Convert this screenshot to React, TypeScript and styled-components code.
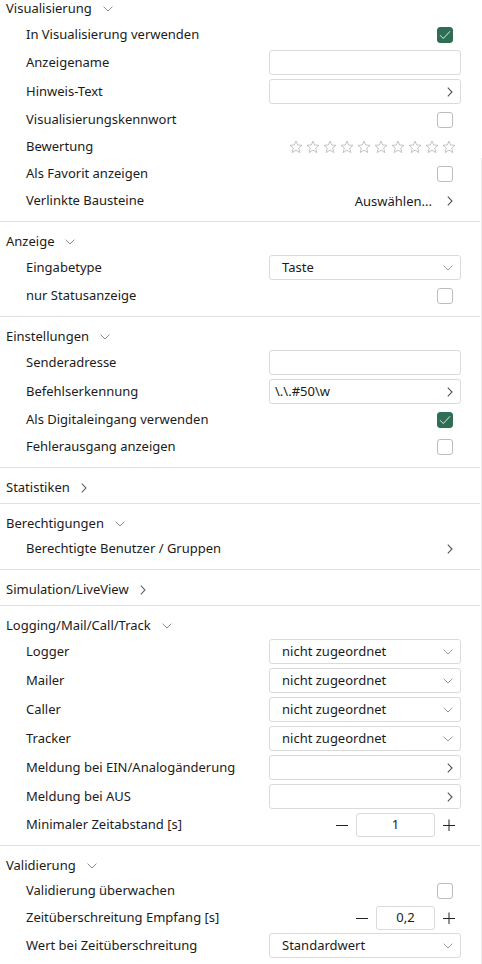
import React from "react";
import styled, { createGlobalStyle } from "styled-components";

const Global = createGlobalStyle`
  html, body { margin: 0; padding: 0; background: #ffffff; }
  body {
    font-family: "Segoe UI", "Noto Sans", "Open Sans", sans-serif;
    font-size: 13px;
    color: #1b1b1b;
  }
  * { box-sizing: border-box; }
`;

const Page = styled.div`
  width: 480px;
  display: flex;
  flex-direction: column;
`;

const ScrollTrack = styled.div`
  position: fixed;
  left: 481px;
  top: 158px;
  bottom: 0;
  width: 1px;
  background: #ececec;
`;

const Section = styled.section<{ $last?: boolean; $collapsed?: boolean }>`
  display: flex;
  flex-direction: column;
  padding-bottom: ${(p) => (p.$collapsed ? 4 : 7)}px;
  border-bottom: ${(p) => (p.$last ? "none" : "1px solid #e1e1e1")};
`;

const Header = styled.div<{ $first?: boolean }>`
  display: flex;
  align-items: ${(p) => (p.$first ? "flex-start" : "center")};
  gap: 11px;
  height: ${(p) => (p.$first ? 21 : 31)}px;
  padding-top: ${(p) => (p.$first ? 0 : 8)}px;
  padding-left: 6px;
  line-height: 17px;
  font-size: 13px;
  color: #1b1b1b;
`;

const HeaderIcon = styled.span`
  display: flex;
  align-items: center;
  height: 17px;
`;

const Row = styled.div<{ $h: number }>`
  display: flex;
  align-items: center;
  justify-content: space-between;
  height: ${(p) => p.$h}px;
  padding: 0 19px 0 26px;
`;

const Label = styled.span`
  white-space: nowrap;
  line-height: 17px;
`;

const Field = styled.div`
  width: 192px;
  height: 25px;
  border: 1px solid #dadada;
  border-radius: 3px;
  display: flex;
  align-items: center;
  justify-content: space-between;
  padding: 0 7px 0 12px;
  background: #fff;
`;

const FieldText = styled.span`
  line-height: 17px;
`;

const FieldPlain = styled.span`
  margin-left: -7px;
  line-height: 17px;
`;

const Box = styled.span<{ $checked?: boolean }>`
  width: 16px;
  height: 16px;
  margin-right: 8px;
  border-radius: 3px;
  border: 1px solid ${(p) => (p.$checked ? "#2f6e55" : "#bcbcbc")};
  background: ${(p) => (p.$checked ? "#2f6e55" : "#fff")};
  display: flex;
  align-items: center;
  justify-content: center;
`;

const Stars = styled.div`
  display: flex;
  gap: 3px;
  margin-right: 5px;
`;

const LinkCell = styled.div`
  display: flex;
  align-items: center;
  gap: 15px;
  margin-right: 8px;
`;

const Stepper = styled.div`
  display: flex;
  align-items: center;
  margin-right: 2px;
`;

const StepBtn = styled.span`
  width: 20px;
  display: flex;
  align-items: center;
  justify-content: center;
`;

const StepValue = styled.div<{ $w: number }>`
  width: ${(p) => p.$w}px;
  height: 24px;
  border: 1px solid #dadada;
  border-radius: 3px;
  display: flex;
  align-items: center;
  justify-content: center;
  margin: 0 4px;
  line-height: 17px;
`;

const ChevronDown = ({ color = "#9a9a9a" }: { color?: string }) => (
  <svg width={10} height={6} viewBox="0 0 10 6">
    <path d="M0.6 0.7 L5 5 L9.4 0.7" fill="none" stroke={color} strokeWidth="1" />
  </svg>
);

const ChevronRight = ({ color = "#555" }: { color?: string }) => (
  <svg width={6} height={10} viewBox="0 0 6 10">
    <path d="M0.8 0.7 L5 5 L0.8 9.3" fill="none" stroke={color} strokeWidth="1.1" />
  </svg>
);

const Check = () => (
  <svg width={12} height={10} viewBox="0 0 12 10">
    <path d="M1 5.2 L4.3 8.5 L11 1.3" fill="none" stroke="#d9efe5" strokeWidth="1" />
  </svg>
);

const Star = () => (
  <svg width={14} height={14} viewBox="0 0 14 14">
    <path
      d="M7 1 L8.7 5 L13 5.3 L9.7 8.1 L10.8 12.6 L7 10.2 L3.2 12.6 L4.3 8.1 L1 5.3 L5.3 5 Z"
      fill="none"
      stroke="#c4c4c4"
      strokeWidth="1"
      strokeLinejoin="round"
    />
  </svg>
);

const Minus = () => (
  <svg width={12} height={12} viewBox="0 0 12 12">
    <path d="M0 6.5 H12" stroke="#222" strokeWidth="1" />
  </svg>
);
const Plus = () => (
  <svg width={12} height={12} viewBox="0 0 12 12">
    <path d="M0 6.5 H12 M6 0.5 V12.5" stroke="#222" strokeWidth="1" />
  </svg>
);

type Ctl =
  | { kind: "check"; checked?: boolean }
  | { kind: "input"; text?: string }
  | { kind: "link"; text?: string }
  | { kind: "select"; text: string }
  | { kind: "stars" }
  | { kind: "choose" }
  | { kind: "arrow" }
  | { kind: "stepper"; value: string; w: number };

type Item = { label: string; ctl: Ctl };

const Control = ({ ctl }: { ctl: Ctl }) => {
  switch (ctl.kind) {
    case "check":
      return <Box $checked={ctl.checked}>{ctl.checked && <Check />}</Box>;
    case "input":
      return (
        <Field>
          <FieldText>{ctl.text ?? ""}</FieldText>
        </Field>
      );
    case "link":
      return (
        <Field>
          <FieldPlain>{ctl.text ?? ""}</FieldPlain>
          <ChevronRight />
        </Field>
      );
    case "select":
      return (
        <Field>
          <FieldText>{ctl.text}</FieldText>
          <ChevronDown />
        </Field>
      );
    case "stars":
      return (
        <Stars>
          {Array.from({ length: 10 }).map((_, i) => (
            <Star key={i} />
          ))}
        </Stars>
      );
    case "choose":
      return (
        <LinkCell>
          <span>Auswählen...</span>
          <ChevronRight />
        </LinkCell>
      );
    case "arrow":
      return (
        <LinkCell>
          <ChevronRight />
        </LinkCell>
      );
    case "stepper":
      return (
        <Stepper>
          <StepBtn>
            <Minus />
          </StepBtn>
          <StepValue $w={ctl.w}>{ctl.value}</StepValue>
          <StepBtn>
            <Plus />
          </StepBtn>
        </Stepper>
      );
  }
};

const rowHeight = (c: Ctl) => (c.kind === "input" || c.kind === "link" || c.kind === "select" ? 29 : 27);

type SectionData = { title: string; items?: Item[]; collapsed?: boolean };

const sections: SectionData[] = [
  {
    title: "Visualisierung",
    items: [
      { label: "In Visualisierung verwenden", ctl: { kind: "check", checked: true } },
      { label: "Anzeigename", ctl: { kind: "input" } },
      { label: "Hinweis-Text", ctl: { kind: "link" } },
      { label: "Visualisierungskennwort", ctl: { kind: "check" } },
      { label: "Bewertung", ctl: { kind: "stars" } },
      { label: "Als Favorit anzeigen", ctl: { kind: "check" } },
      { label: "Verlinkte Bausteine", ctl: { kind: "choose" } },
    ],
  },
  {
    title: "Anzeige",
    items: [
      { label: "Eingabetype", ctl: { kind: "select", text: "Taste" } },
      { label: "nur Statusanzeige", ctl: { kind: "check" } },
    ],
  },
  {
    title: "Einstellungen",
    items: [
      { label: "Senderadresse", ctl: { kind: "input" } },
      { label: "Befehlserkennung", ctl: { kind: "link", text: "\\.\\.#50\\w" } },
      { label: "Als Digitaleingang verwenden", ctl: { kind: "check", checked: true } },
      { label: "Fehlerausgang anzeigen", ctl: { kind: "check" } },
    ],
  },
  { title: "Statistiken", collapsed: true },
  {
    title: "Berechtigungen",
    items: [{ label: "Berechtigte Benutzer / Gruppen", ctl: { kind: "arrow" } }],
  },
  { title: "Simulation/LiveView", collapsed: true },
  {
    title: "Logging/Mail/Call/Track",
    items: [
      { label: "Logger", ctl: { kind: "select", text: "nicht zugeordnet" } },
      { label: "Mailer", ctl: { kind: "select", text: "nicht zugeordnet" } },
      { label: "Caller", ctl: { kind: "select", text: "nicht zugeordnet" } },
      { label: "Tracker", ctl: { kind: "select", text: "nicht zugeordnet" } },
      { label: "Meldung bei EIN/Analogänderung", ctl: { kind: "link" } },
      { label: "Meldung bei AUS", ctl: { kind: "link" } },
      { label: "Minimaler Zeitabstand [s]", ctl: { kind: "stepper", value: "1", w: 79 } },
    ],
  },
  {
    title: "Validierung",
    items: [
      { label: "Validierung überwachen", ctl: { kind: "check" } },
      { label: "Zeitüberschreitung Empfang [s]", ctl: { kind: "stepper", value: "0,2", w: 59 } },
      { label: "Wert bei Zeitüberschreitung", ctl: { kind: "select", text: "Standardwert" } },
    ],
  },
];

export default function App() {
  return (
    <>
      <Global />
      <Page>
        {sections.map((s, si) => (
          <Section key={s.title} $collapsed={s.collapsed} $last={si === sections.length - 1}>
            <Header $first={si === 0}>
              <span>{s.title}</span>
              <HeaderIcon>{s.collapsed ? <ChevronRight color="#666" /> : <ChevronDown color="#8a8a8a" />}</HeaderIcon>
            </Header>
            {s.items?.map((it) => (
              <Row key={it.label} $h={rowHeight(it.ctl)}>
                <Label>{it.label}</Label>
                <Control ctl={it.ctl} />
              </Row>
            ))}
          </Section>
        ))}
      </Page>
      <ScrollTrack />
    </>
  );
}
